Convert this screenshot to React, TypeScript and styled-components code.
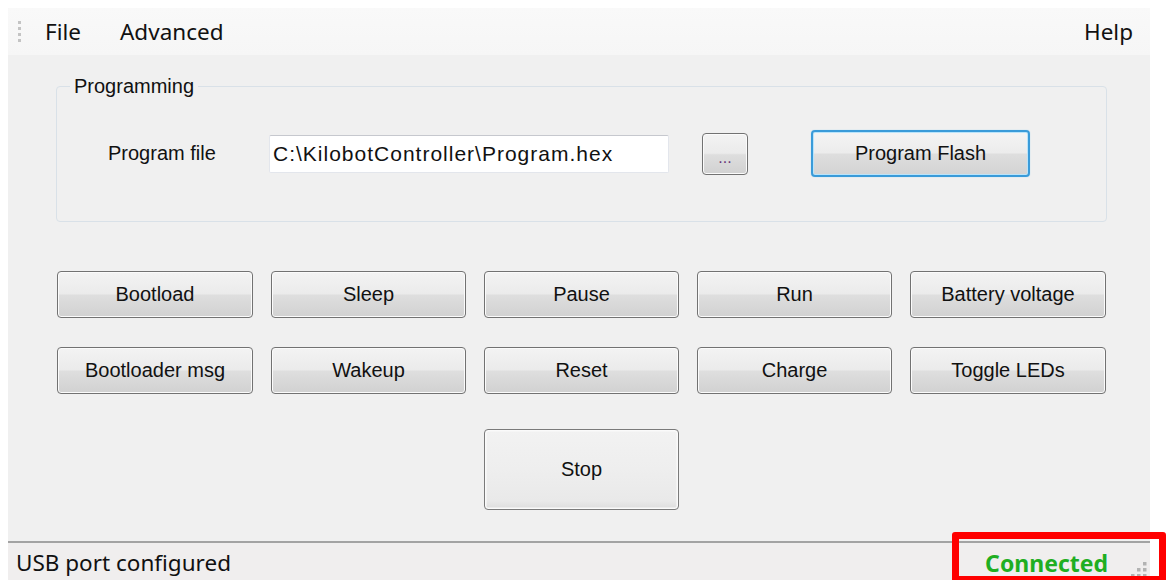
import React from "react"
import styled, { createGlobalStyle, css } from "styled-components"

const GlobalStyle = createGlobalStyle`
  html, body {
    margin: 0;
    padding: 0;
    background: #ffffff;
    overflow: hidden;
  }
`

const uiFont = `"Noto Sans", "Open Sans", sans-serif`
const formFont = `"Liberation Sans", Arial, sans-serif`

const Window = styled.div`
  position: relative;
  display: flex;
  flex-direction: column;
  width: 1142px;
  height: 572px;
  margin: 8px 0 0 8px;
  background: #f0f0f0;
  color: #111;
`

const MenuBar = styled.div`
  display: flex;
  align-items: center;
  height: 47px;
  padding-left: 10px;
  padding-right: 17px;
  background: linear-gradient(#f9f9f9, #f6f6f6);
  font-family: ${uiFont};
  font-size: 22.5px;
`

const Grip = styled.span`
  display: flex;
  flex-direction: column;
  gap: 3px;
  width: 3px;
  margin-right: 24px;

  & > i {
    display: block;
    width: 3px;
    height: 3px;
    background: #c4c4c4;
  }
`

const MenuItem = styled.span<{ $right?: boolean }>`
  margin-right: 39px;
  ${(p) =>
    p.$right &&
    css`
      margin-left: auto;
      margin-right: 0;
    `}
`

const Content = styled.div`
  flex: 1;
  padding: 31px 0 0 48px;
`

const Group = styled.div`
  position: relative;
  box-sizing: border-box;
  width: 1051px;
  height: 136px;
  border: 1.5px solid #d9e1e8;
  border-radius: 4px;
  padding: 43px 0 0 51px;
  font-family: ${formFont};
  font-size: 20px;
`

const Legend = styled.span`
  position: absolute;
  top: -13px;
  left: 13px;
  padding: 0 4px;
  background: #f0f0f0;
  line-height: 24px;
`

const FileRow = styled.div`
  display: flex;
  align-items: center;
  height: 47px;
`

const FieldLabel = styled.label`
  width: 161px;
`

const PathBox = styled.div`
  box-sizing: border-box;
  display: flex;
  align-items: center;
  width: 400px;
  height: 38px;
  padding-left: 3px;
  margin-right: 33px;
  background: #fff;
  border: 1px solid #e3e6ec;
  border-top-color: #c6c8ce;
  border-radius: 2px;
  font-size: 21px;
  letter-spacing: 1px;
  white-space: nowrap;
`

const Button = styled.button<{ $variant?: "focus" | "flat" }>`
  box-sizing: border-box;
  display: flex;
  align-items: center;
  justify-content: center;
  padding: 0;
  height: 47px;
  font-family: ${formFont};
  font-size: 20px;
  color: #111;
  border: 1.5px solid #727272;
  border-radius: 4px;
  box-shadow: inset 0 0 0 1px #fbfbfb;
  background: linear-gradient(#f3f3f3 0%, #ebebeb 48%, #dedede 52%, #d1d1d1 100%);

  ${(p) =>
    p.$variant === "focus" &&
    css`
      border: 2px solid #3a9bd9;
      box-shadow: inset 0 0 0 1px #b9e4fb, 0 0 1px #7cc6ef;
      background: linear-gradient(#f4f4f4 0%, #ececec 48%, #dedede 52%, #d3d3d3 100%);
    `}

  ${(p) =>
    p.$variant === "flat" &&
    css`
      height: 81px;
      margin-top: 6px;
      border-color: #7a7a7a;
      box-shadow: inset 0 0 0 1.5px #fafafa;
      background: linear-gradient(#f2f2f2 0%, #eeeeee 50%, #e9e9e9 90%, #dcdcdc 100%);
    `}
`

const BrowseButton = styled(Button)`
  width: 46px;
  height: 42px;
  margin-right: 63px;
  padding-top: 8px;
  font-size: 16px;
  color: #6a3a7a;
`

const FlashButton = styled(Button)`
  width: 219px;
`

const ButtonGrid = styled.div`
  display: grid;
  grid-template-columns: 196px 195px 195px 195px 196px;
  column-gap: 18px;
  row-gap: 29px;
  margin: 49px 0 0 1px;
`

const StopButton = styled(Button)`
  grid-column: 3;
`

const StatusBar = styled.div`
  display: flex;
  align-items: center;
  height: 39px;
  padding: 2px 2px 0 8px;
  box-sizing: border-box;
  border-top: 2px solid #a3a3a3;
  background: #f0eeee;
  font-family: ${uiFont};
  font-size: 22.5px;
`

const StatusText = styled.span`
  flex: 1;
`

const Connected = styled.span`
  font-weight: 700;
  font-size: 23px;
  color: #1fae22;
  margin-right: 18px;
`

const GripIcon = styled.svg`
  align-self: flex-end;
  margin-bottom: 1px;
`

const SizeGrip = () => (
  <GripIcon width="22" height="22" viewBox="0 0 22 22">
    {[
      [17, 5],
      [11, 11],
      [17, 11],
      [5, 17],
      [11, 17],
      [17, 17],
    ].map(([x, y]) => (
      <rect key={`${x}-${y}`} x={x} y={y} width="3.5" height="3.5" fill="#b3b3b3" />
    ))}
  </GripIcon>
)

const Callout = styled.div`
  position: absolute;
  left: 944px;
  top: 524px;
  box-sizing: border-box;
  width: 214px;
  height: 51px;
  border: 7px solid #ff0000;
  border-radius: 3px;
  pointer-events: none;
`

const commands = [
  "Bootload",
  "Sleep",
  "Pause",
  "Run",
  "Battery voltage",
  "Bootloader msg",
  "Wakeup",
  "Reset",
  "Charge",
  "Toggle LEDs",
]

export default function App() {
  return (
    <>
      <GlobalStyle />
      <Window>
        <MenuBar>
          <Grip>
            <i />
            <i />
            <i />
            <i />
          </Grip>
          <MenuItem>File</MenuItem>
          <MenuItem>Advanced</MenuItem>
          <MenuItem $right>Help</MenuItem>
        </MenuBar>

        <Content>
          <Group>
            <Legend>Programming</Legend>
            <FileRow>
              <FieldLabel>Program file</FieldLabel>
              <PathBox>C:\KilobotController\Program.hex</PathBox>
              <BrowseButton>...</BrowseButton>
              <FlashButton $variant="focus">Program Flash</FlashButton>
            </FileRow>
          </Group>

          <ButtonGrid>
            {commands.map((name) => (
              <Button key={name}>{name}</Button>
            ))}
            <StopButton $variant="flat">Stop</StopButton>
          </ButtonGrid>
        </Content>

        <StatusBar>
          <StatusText>USB port configured</StatusText>
          <Connected>Connected</Connected>
          <SizeGrip />
        </StatusBar>

        <Callout />
      </Window>
    </>
  )
}
